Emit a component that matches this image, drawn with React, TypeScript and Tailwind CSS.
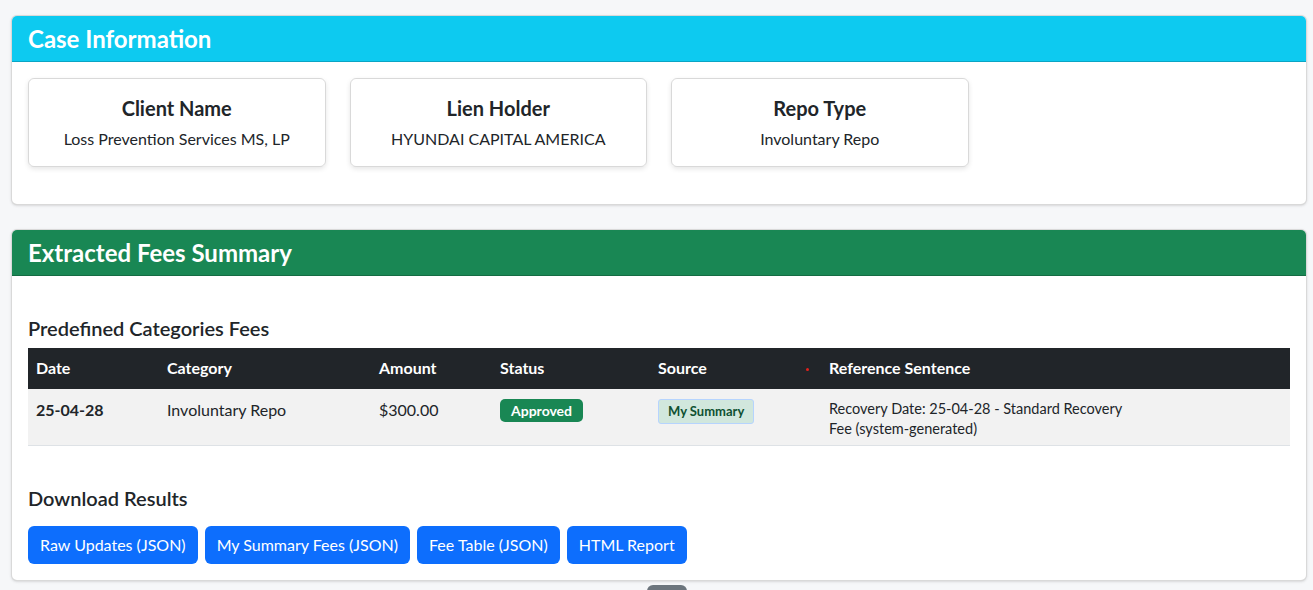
import React from "react";

const infoCards = [
  { title: "Client Name", value: "Loss Prevention Services MS, LP" },
  { title: "Lien Holder", value: "HYUNDAI CAPITAL AMERICA" },
  { title: "Repo Type", value: "Involuntary Repo" },
];

const downloads = [
  "Raw Updates (JSON)",
  "My Summary Fees (JSON)",
  "Fee Table (JSON)",
  "HTML Report",
];

const App = () => {
  return (
    <div
      className="min-h-screen bg-[#f6f7f9] pl-[11px] pr-[6px] pt-[15px] text-[#212529]"
      style={{ fontFamily: "Lato, 'Noto Sans', sans-serif" }}
    >
      {/* Case Information */}
      <div className="overflow-hidden rounded-md border border-black/15 bg-white shadow-sm">
        <div className="border-b border-[#0aa5c4] bg-[#0dcaf0] px-4 py-[7px]">
          <h4 className="text-[24px] font-bold leading-[31px] text-white">
            Case Information
          </h4>
        </div>
        <div className="grid grid-cols-4 gap-6 px-4 pb-[37px] pt-4">
          {infoCards.map((c) => (
            <div
              key={c.title}
              className="flex h-[89px] flex-col items-center rounded-md border border-black/15 pt-[17px] shadow-[0_2px_5px_rgba(0,0,0,0.1)]"
            >
              <h5 className="text-[20px] font-bold leading-6">{c.title}</h5>
              <p className="mt-[7px] text-[16px] leading-[23px]">{c.value}</p>
            </div>
          ))}
        </div>
      </div>

      {/* Extracted Fees Summary */}
      <div className="mt-[24px] overflow-hidden rounded-md border border-black/15 bg-white shadow-sm">
        <div className="border-b border-[#146c43] bg-[#198754] px-4 py-[7px]">
          <h4 className="text-[24px] font-bold leading-[31px] text-white">
            Extracted Fees Summary
          </h4>
        </div>
        <div className="px-4 pb-4 pt-4">
          <h5 className="mt-6 mb-2 text-[20px] font-semibold leading-6">
            Predefined Categories Fees
          </h5>
          <table className="w-full border-collapse text-left text-[16px]">
            <thead>
              <tr className="bg-[#212529] text-white">
                <th className="w-[131px] px-2 pt-[7px] pb-[9px] font-bold leading-[25px]">Date</th>
                <th className="w-[212px] px-2 pt-[7px] pb-[9px] font-bold">Category</th>
                <th className="w-[121px] px-2 pt-[7px] pb-[9px] font-bold">Amount</th>
                <th className="w-[158px] px-2 pt-[7px] pb-[9px] font-bold">Status</th>
                <th className="w-[171px] px-2 pt-[7px] pb-[9px] font-bold">
                  <div className="flex items-center justify-between">
                    <span>Source</span>
                    <span className="mr-[4px] mt-[4px] h-[3px] w-[3px] rounded-full bg-[#e3211c]" />
                  </div>
                </th>
                <th className="px-2 pt-[7px] pb-[9px] font-bold">Reference Sentence</th>
              </tr>
            </thead>
            <tbody>
              <tr className="border-b border-[#dee2e6] bg-[#f2f2f2] align-top">
                <td className="px-2 pt-[9px] font-bold">25-04-28</td>
                <td className="px-2 pt-[9px]">Involuntary Repo</td>
                <td className="px-2 pt-[9px]">$300.00</td>
                <td className="px-2 pt-[9px]">
                  <span className="inline-block rounded-[5px] bg-[#198754] px-[11px] py-[3px] text-[14px] font-bold leading-[17px] text-white">
                    Approved
                  </span>
                </td>
                <td className="px-2 pt-[9px]">
                  <span className="inline-block rounded-[3px] border border-[#b6d4fe] bg-[#d1e7dd] px-[9px] py-[3px] text-[13px] font-bold leading-[17px] text-[#0f5132]">
                    My Summary
                  </span>
                </td>
                <td className="px-2 pb-[6px] pt-[10px]">
                  <div className="w-[300px] text-[14.5px] leading-[20px]">
                    Recovery Date: 25-04-28 - Standard Recovery Fee (system-generated)
                  </div>
                </td>
              </tr>
            </tbody>
          </table>

          <h5 className="mt-[40px] mb-[16px] text-[20px] font-semibold leading-6">
            Download Results
          </h5>
          <div className="flex gap-[7px]">
            {downloads.map((d) => (
              <button
                key={d}
                className="h-[38px] rounded-md bg-[#0d6efd] px-[12px] text-[16px] text-white"
              >
                {d}
              </button>
            ))}
          </div>
        </div>
      </div>

      {/* partially visible floating button */}
      <div className="flex justify-center pt-[4px]">
        <div className="ml-[15px] h-[10px] w-[40px] rounded-t-md bg-[#6c757d]" />
      </div>
    </div>
  );
};

export default App;
